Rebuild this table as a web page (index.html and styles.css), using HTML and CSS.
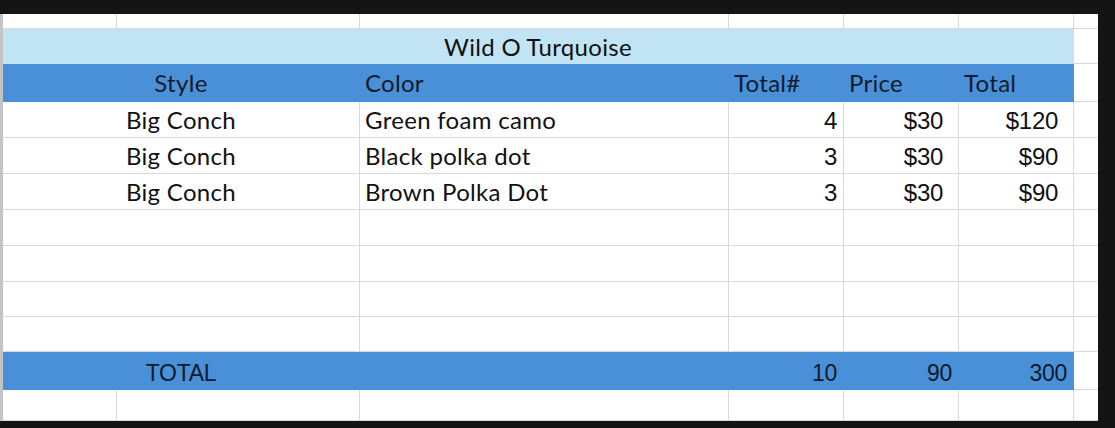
FILE: index.html
```html
<!DOCTYPE html>
<html lang="en">
<head>
    <meta charset="UTF-8">
    <meta name="viewport" content="width=device-width, initial-scale=1.0">
    <title>Wild O Turquoise</title>
    <link rel="stylesheet" href="styles.css">
</head>
<body>
    <div class="frame">
        <div class="sheet">
            <!-- row above the table -->
            <div class="cell"></div>
            <div class="cell"></div>
            <div class="cell"></div>
            <div class="cell"></div>
            <div class="cell"></div>
            <div class="cell"></div>
            <div class="cell last"></div>

            <div class="cell span-all title">Wild O Turquoise</div>
            <div class="cell last"></div>

            <div class="cell span-ab head center">Style</div>
            <div class="cell head">Color</div>
            <div class="cell head">Total#</div>
            <div class="cell head">Price</div>
            <div class="cell head">Total</div>
            <div class="cell last"></div>

            <div class="cell span-ab center">Big Conch</div>
            <div class="cell">Green foam camo</div>
            <div class="cell num">4</div>
            <div class="cell num cur">$30</div>
            <div class="cell num cur">$120</div>
            <div class="cell last"></div>

            <div class="cell span-ab center">Big Conch</div>
            <div class="cell">Black polka dot</div>
            <div class="cell num">3</div>
            <div class="cell num cur">$30</div>
            <div class="cell num cur">$90</div>
            <div class="cell last"></div>

            <div class="cell span-ab center">Big Conch</div>
            <div class="cell">Brown Polka Dot</div>
            <div class="cell num">3</div>
            <div class="cell num cur">$30</div>
            <div class="cell num cur">$90</div>
            <div class="cell last"></div>

            <div class="cell span-ab"></div>
            <div class="cell"></div>
            <div class="cell"></div>
            <div class="cell"></div>
            <div class="cell"></div>
            <div class="cell last"></div>

            <div class="cell span-ab"></div>
            <div class="cell"></div>
            <div class="cell"></div>
            <div class="cell"></div>
            <div class="cell"></div>
            <div class="cell last"></div>

            <div class="cell span-ab"></div>
            <div class="cell"></div>
            <div class="cell"></div>
            <div class="cell"></div>
            <div class="cell"></div>
            <div class="cell last"></div>

            <div class="cell span-ab"></div>
            <div class="cell"></div>
            <div class="cell"></div>
            <div class="cell"></div>
            <div class="cell"></div>
            <div class="cell last"></div>

            <div class="cell span-ab total center">TOTAL</div>
            <div class="cell total"></div>
            <div class="cell total num">10</div>
            <div class="cell total num">90</div>
            <div class="cell total num">300</div>
            <div class="cell last"></div>

            <!-- row below the table -->
            <div class="cell"></div>
            <div class="cell"></div>
            <div class="cell"></div>
            <div class="cell"></div>
            <div class="cell"></div>
            <div class="cell"></div>
            <div class="cell last"></div>
        </div>
    </div>
</body>
</html>
```

FILE: styles.css
```css
* {
    box-sizing: border-box;
    margin: 0;
    padding: 0;
}

body {
    background: #141414;
    height: 100vh;
    overflow: hidden;
}

.frame {
    padding: 14px 17px 7px 0;
}

.sheet {
    display: grid;
    grid-template-columns: 114px 243px 369px 115px 115px 115px 24px;
    grid-template-rows: 15px 35px 38px repeat(5, 36px) 35px 35px 38px 31px;
    background: #fff;
    border-left: 3px solid #c4c4c4;
    font-family: 'Lato', sans-serif;
    font-size: 24px;
    letter-spacing: 0.3px;
    color: #111;
}

.cell {
    display: flex;
    align-items: flex-end;
    padding: 0 5px 5px;
    line-height: 1;
    white-space: nowrap;
    border-right: 1px solid #d8d8d8;
    border-bottom: 1px solid #d8d8d8;
}

.cell.last {
    border-right: none;
}

.span-ab {
    grid-column: span 2;
}

.span-all {
    grid-column: span 6;
}

.center {
    justify-content: center;
}

.title {
    justify-content: center;
    background: #c1e4f5;
    border-color: #c1e4f5;
    padding-bottom: 4px;
}

.head {
    background: #4a90d8;
    border-color: #4a90d8;
    color: #121c2b;
    padding-bottom: 6px;
}

.num {
    justify-content: flex-end;
    font-family: 'Liberation Sans', sans-serif;
    letter-spacing: -0.3px;
    padding-right: 6px;
    padding-bottom: 4px;
}

.num.cur {
    padding-right: 15px;
}

.total {
    background: #4a90d8;
    border-color: #4a90d8;
    font-family: 'Liberation Sans', sans-serif;
    font-size: 23px;
    letter-spacing: -0.3px;
    color: #101a28;
    padding-bottom: 4px;
}
```
